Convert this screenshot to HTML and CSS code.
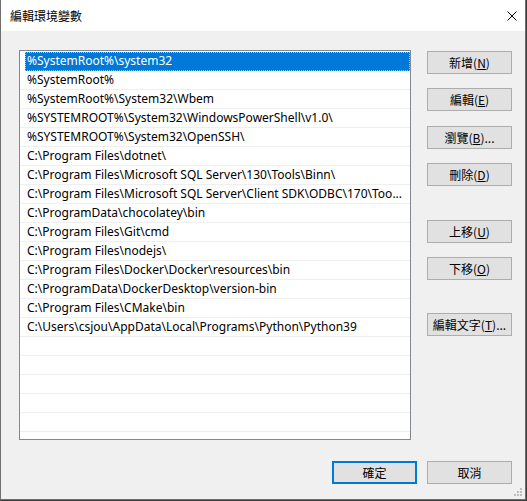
FILE: index.html
```html
<!DOCTYPE html>
<html lang="zh-Hant">
<head>
<meta charset="utf-8">
<link rel="stylesheet" href="styles.css">
</head>
<body>
<div class="window">
  <div class="titlebar">
    <span class="title">編輯環境變數</span>
    <svg class="close" width="10" height="10" viewBox="0 0 10 10"><path d="M0.5 0.5 L9.5 9.5 M9.5 0.5 L0.5 9.5" stroke="#000" stroke-width="1" fill="none"/></svg>
  </div>
  <div class="body">
    <div class="main">
      <div class="list">
        <div class="row selected"><span class="sel">%SystemRoot%\system32</span></div>
        <div class="row"><span class="txt">%SystemRoot%</span></div>
        <div class="row"><span class="txt">%SystemRoot%\System32\Wbem</span></div>
        <div class="row"><span class="txt">%SYSTEMROOT%\System32\WindowsPowerShell\v1.0\</span></div>
        <div class="row"><span class="txt">%SYSTEMROOT%\System32\OpenSSH\</span></div>
        <div class="row"><span class="txt">C:\Program Files\dotnet\</span></div>
        <div class="row"><span class="txt">C:\Program Files\Microsoft SQL Server\130\Tools\Binn\</span></div>
        <div class="row"><span class="txt">C:\Program Files\Microsoft SQL Server\Client SDK\ODBC\170\Too...</span></div>
        <div class="row"><span class="txt">C:\ProgramData\chocolatey\bin</span></div>
        <div class="row"><span class="txt">C:\Program Files\Git\cmd</span></div>
        <div class="row"><span class="txt">C:\Program Files\nodejs\</span></div>
        <div class="row"><span class="txt">C:\Program Files\Docker\Docker\resources\bin</span></div>
        <div class="row"><span class="txt">C:\ProgramData\DockerDesktop\version-bin</span></div>
        <div class="row"><span class="txt">C:\Program Files\CMake\bin</span></div>
        <div class="row"><span class="txt">C:\Users\csjou\AppData\Local\Programs\Python\Python39</span></div>
        <div class="row"></div>
        <div class="row"></div>
        <div class="row"></div>
        <div class="row"></div>
        <div class="row"></div>
        <div class="row"></div>
      </div>
      <div class="side">
        <button class="btn">新增(<u>N</u>)</button>
        <button class="btn gap-s">編輯(<u>E</u>)</button>
        <button class="btn gap-m">瀏覽(<u>B</u>)...</button>
        <button class="btn gap-s">刪除(<u>D</u>)</button>
        <button class="btn gap-l">上移(<u>U</u>)</button>
        <button class="btn gap-s">下移(<u>O</u>)</button>
        <button class="btn gap-xl">編輯文字(<u>T</u>)...</button>
      </div>
    </div>
    <div class="footer">
      <button class="btn default">確定</button>
      <button class="btn">取消</button>
    </div>
  </div>
  <svg class="grip" width="10" height="10" viewBox="0 0 10 10" fill="#bfbfbf">
    <rect x="7" y="0" width="2" height="2"/>
    <rect x="4" y="3" width="2" height="2"/><rect x="7" y="3" width="2" height="2"/>
    <rect x="1" y="6" width="2" height="2"/><rect x="4" y="6" width="2" height="2"/><rect x="7" y="6" width="2" height="2"/>
  </svg>
</div>
</body>
</html>
```
FILE: styles.css
```css
* { box-sizing: border-box; }
html, body { margin: 0; padding: 0; }
body {
  background: #3c3c3c;
  width: 527px;
  height: 501px;
  overflow: hidden;
  font-family: "Noto Sans", "Noto Sans CJK TC", sans-serif;
  font-size: 12px;
  color: #000;
}
.window {
  position: relative;
  width: 526px;
  height: 500px;
  background: #f0f0f0;
  border-left: 1px solid #6e6e6e;
  border-right: 1px solid #6e6e6e;
  border-bottom: 1px solid #6e6e6e;
  display: flex;
  flex-direction: column;
}
.titlebar {
  height: 31px;
  background: #fff;
  display: flex;
  align-items: center;
  padding-left: 9px;
  padding-right: 8px;
  flex-shrink: 0;
}
.title {
  font-family: "Noto Sans CJK TC", sans-serif;
  font-size: 12px;
  flex: 1;
  line-height: 1;
  padding-top: 1px;
}
.close { display: block; margin-top: 1px; }
.body {
  flex: 1;
  display: flex;
  flex-direction: column;
  padding: 19px 0 0 18px;
}
.main {
  display: flex;
  gap: 16px;
}
.list {
  width: 392px;
  height: 390px;
  border: 1px solid #828790;
  background: #fff;
  padding-top: 1px;
  overflow: hidden;
}
.row {
  height: 19px;
  border-bottom: 1px solid #efefef;
  display: flex;
  align-items: center;
  white-space: nowrap;
  overflow: hidden;
}
.txt {
  padding-left: 7px;
  line-height: 18px;
}
.row.selected { border-bottom: none; height: 19px; }
.sel {
  display: block;
  margin-left: 5px;
  width: calc(100% - 5px);
  height: 19px;
  line-height: 18px;
  padding-left: 2px;
  background: #0078d7;
  color: #fff;
  outline: 1px dotted #f4b66a;
  outline-offset: -1px;
}
.side {
  display: flex;
  flex-direction: column;
  padding-top: 1px;
}
.btn {
  width: 85px;
  height: 23px;
  background: #e1e1e1;
  border: 1px solid #adadad;
  font-family: "Noto Sans CJK TC", sans-serif;
  font-size: 12px;
  color: #000;
  padding: 0;
  line-height: 1;
  margin: 0;
}
.btn u { text-underline-offset: 1px; }
.gap-s { margin-top: 14px; }
.gap-m { margin-top: 15px; }
.gap-l { margin-top: 34px; }
.gap-xl { margin-top: 33px; }
.footer {
  display: flex;
  justify-content: flex-end;
  gap: 10px;
  padding-right: 13px;
  margin-top: 21px;
}
.btn.default {
  border: 2px solid #0078d7;
}
.grip {
  position: absolute;
  right: 2px;
  bottom: 1px;
}
```
